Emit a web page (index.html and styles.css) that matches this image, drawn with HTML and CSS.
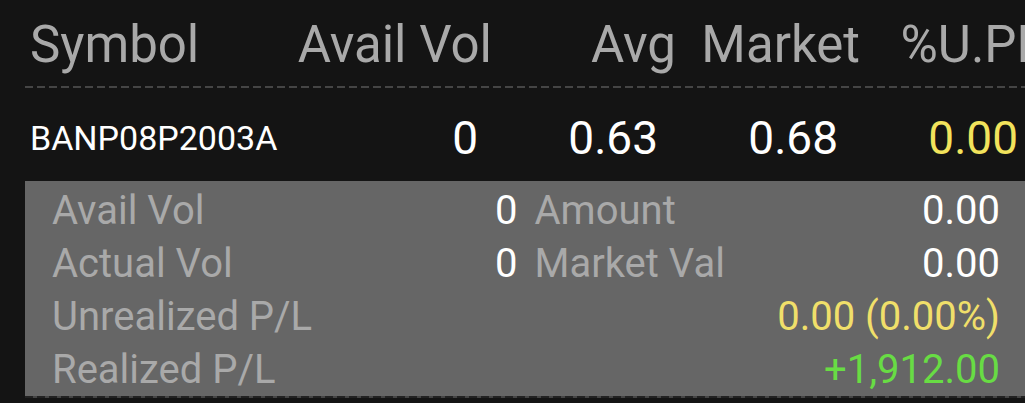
FILE: index.html
```html
<!DOCTYPE html>
<html lang="en">
<head>
    <meta charset="UTF-8">
    <meta name="viewport" content="width=device-width, initial-scale=1.0">
    <title>Portfolio</title>
    <link rel="stylesheet" href="styles.css">
</head>
<body>
    <div class="positions">
        <div class="head">
            <div class="cell sym">Symbol</div>
            <div class="cell vol">Avail Vol</div>
            <div class="cell">Avg</div>
            <div class="cell">Market</div>
            <div class="cell">%U.PL</div>
        </div>
        <div class="dash"></div>
        <div class="row">
            <div class="cell sym">BANP08P2003A</div>
            <div class="cell vol num">0</div>
            <div class="cell num">0.63</div>
            <div class="cell num">0.68</div>
            <div class="cell num yellow">0.00</div>
        </div>
        <div class="detail">
            <div class="pair"><span class="label">Avail Vol</span><span class="value">0</span></div>
            <div class="pair"><span class="label">Amount</span><span class="value">0.00</span></div>
            <div class="pair"><span class="label">Actual Vol</span><span class="value">0</span></div>
            <div class="pair"><span class="label">Market Val</span><span class="value">0.00</span></div>
            <div class="pair wide"><span class="label">Unrealized P/L</span><span class="value yellow">0.00 (0.00%)</span></div>
            <div class="pair wide"><span class="label">Realized P/L</span><span class="value green">+1,912.00</span></div>
        </div>
        <div class="dash bottom"></div>
    </div>
</body>
</html>
```

FILE: styles.css
```css
html, body {
    margin: 0;
    overflow: hidden;
}
body {
    font-family: Roboto, "Noto Sans", sans-serif;
    background-color: #141414;
    color: #ffffff;
    height: 403px;
}
.positions {
    margin-left: 25px;
    width: 1019px;
}
.head, .row {
    display: flex;
}
.cell {
    width: 184px;
    flex-shrink: 0;
    text-align: right;
    white-space: nowrap;
    box-sizing: border-box;
}
.cell.sym {
    width: 270px;
    text-align: left;
    padding-left: 5px;
}
.cell.vol {
    width: 197px;
}
.head {
    font-size: 51px;
    line-height: 60px;
    color: #a9a9a9;
    padding-top: 15px;
    height: 71px;
}
.dash {
    height: 2px;
    background-image: repeating-linear-gradient(to right, #454545 0 8px, transparent 8px 12px);
}
.dash.bottom {
    background-color: #454545;
    background-image: repeating-linear-gradient(to right, #222222 0 8px, transparent 8px 12px);
}
.row {
    align-items: center;
    height: 93px;
    padding-top: 6px;
    box-sizing: border-box;
}
.row .sym {
    font-size: 34px;
}
.row .num {
    font-size: 46px;
}
.row .num:nth-child(2) { padding-right: 14px; }
.row .num:nth-child(3) { padding-right: 18px; }
.row .num:nth-child(4) { padding-right: 22px; }
.row .num:nth-child(5) { padding-right: 26px; }
.yellow {
    color: #f2e35c;
}
.green {
    color: #68dc44;
}
.detail {
    background-color: #666666;
    display: grid;
    grid-template-columns: 1fr 1fr;
    column-gap: 17px;
    padding: 3px 44px 0 27px;
    height: 215px;
    box-sizing: border-box;
    font-size: 40px;
    line-height: 53px;
}
.pair {
    display: flex;
    justify-content: space-between;
    white-space: nowrap;
}
.pair.wide {
    grid-column: 1 / 3;
}
.label {
    color: #a9a9a9;
}
.detail .yellow {
    color: #f0df6a;
}
```
